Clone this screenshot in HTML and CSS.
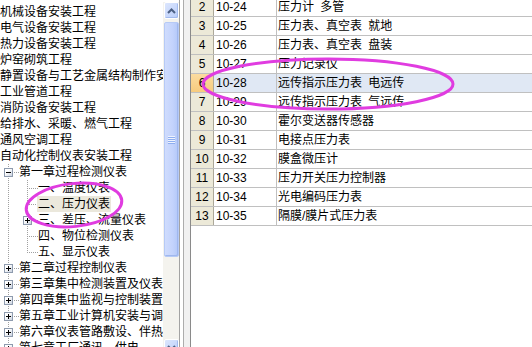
FILE: index.html
```html
<!DOCTYPE html>
<html lang="zh-CN">
<head>
<meta charset="utf-8">
<title>定额树</title>
<link rel="stylesheet" href="styles.css">
</head>
<body>
<div class="app">
  <div class="tree-pane">
    <div class="tree">
      <div class="tree-inner">
        <div class="row"><span class="g"></span><span class="lbl">机械设备安装工程</span></div>
        <div class="row"><span class="g"></span><span class="lbl">电气设备安装工程</span></div>
        <div class="row"><span class="g"></span><span class="lbl">热力设备安装工程</span></div>
        <div class="row"><span class="g"></span><span class="lbl">炉窑砌筑工程</span></div>
        <div class="row"><span class="g"></span><span class="lbl">静置设备与工艺金属结构制作安装工程</span></div>
        <div class="row"><span class="g"></span><span class="lbl">工业管道工程</span></div>
        <div class="row"><span class="g"></span><span class="lbl">消防设备安装工程</span></div>
        <div class="row"><span class="g"></span><span class="lbl">给排水、采暖、燃气工程</span></div>
        <div class="row"><span class="g"></span><span class="lbl">通风空调工程</span></div>
        <div class="row"><span class="g"></span><span class="lbl">自动化控制仪表安装工程</span></div>
        <div class="row"><span class="g"></span><span class="g t"><span class="box minus"></span></span><span class="lbl">第一章过程检测仪表</span></div>
        <div class="row"><span class="g"></span><span class="g v"></span><span class="g t"></span><span class="lbl">一、温度仪表</span></div>
        <div class="row"><span class="g"></span><span class="g v"></span><span class="g t"></span><span class="lbl sel">二、压力仪表</span></div>
        <div class="row"><span class="g"></span><span class="g v"></span><span class="g t"><span class="box plus"></span></span><span class="lbl">三、差压、流量仪表</span></div>
        <div class="row"><span class="g"></span><span class="g v"></span><span class="g t"></span><span class="lbl">四、物位检测仪表</span></div>
        <div class="row"><span class="g"></span><span class="g v"></span><span class="g l"></span><span class="lbl">五、显示仪表</span></div>
        <div class="row"><span class="g"></span><span class="g t"><span class="box plus"></span></span><span class="lbl">第二章过程控制仪表</span></div>
        <div class="row"><span class="g"></span><span class="g t"><span class="box plus"></span></span><span class="lbl">第三章集中检测装置及仪表</span></div>
        <div class="row"><span class="g"></span><span class="g t"><span class="box plus"></span></span><span class="lbl">第四章集中监视与控制装置</span></div>
        <div class="row"><span class="g"></span><span class="g t"><span class="box plus"></span></span><span class="lbl">第五章工业计算机安装与调试</span></div>
        <div class="row"><span class="g"></span><span class="g t"><span class="box plus"></span></span><span class="lbl">第六章仪表管路敷设、伴热</span></div>
        <div class="row"><span class="g"></span><span class="g t"><span class="box plus"></span></span><span class="lbl">第七章工厂通讯、供电</span></div>
      </div>
    </div>
    <div class="vscroll">
      <div class="sb-btn">
        <svg width="9" height="6" viewBox="0 0 9 6"><polyline points="1,5 4.5,1.5 8,5" fill="none" stroke="#4d6185" stroke-width="2"/></svg>
      </div>
      <div class="sb-track">
        <div class="thumb"></div>
      </div>
      <div class="sb-btn">
        <svg width="9" height="6" viewBox="0 0 9 6"><polyline points="1,1 4.5,4.5 8,1" fill="none" stroke="#4d6185" stroke-width="2"/></svg>
      </div>
    </div>
  </div>
  <div class="splitter"></div>
  <div class="grid-pane">
    <div class="grid">
      <div class="grow"><span class="num">2</span><span class="code">10-24</span><span class="name">压力计 多管</span></div>
      <div class="grow"><span class="num">3</span><span class="code">10-25</span><span class="name">压力表、真空表 就地</span></div>
      <div class="grow"><span class="num">4</span><span class="code">10-26</span><span class="name">压力表、真空表 盘装</span></div>
      <div class="grow"><span class="num">5</span><span class="code">10-27</span><span class="name">压力记录仪</span></div>
      <div class="grow cur"><span class="num">6</span><span class="code">10-28</span><span class="name">远传指示压力表 电远传</span></div>
      <div class="grow"><span class="num">7</span><span class="code">10-29</span><span class="name">远传指示压力表 气远传</span></div>
      <div class="grow"><span class="num">8</span><span class="code">10-30</span><span class="name">霍尔变送器传感器</span></div>
      <div class="grow"><span class="num">9</span><span class="code">10-31</span><span class="name">电接点压力表</span></div>
      <div class="grow"><span class="num">10</span><span class="code">10-32</span><span class="name">膜盒微压计</span></div>
      <div class="grow"><span class="num">11</span><span class="code">10-33</span><span class="name">压力开关压力控制器</span></div>
      <div class="grow"><span class="num">12</span><span class="code">10-34</span><span class="name">光电编码压力表</span></div>
      <div class="grow"><span class="num">13</span><span class="code">10-35</span><span class="name">隔膜/膜片式压力表</span></div>
    </div>
  </div>
  <svg class="marks" width="532" height="347" viewBox="0 0 532 347">
    <ellipse cx="74" cy="205" rx="48" ry="21.5" transform="rotate(-6 74 205)" fill="none" stroke="#e03ce0" stroke-width="3"/>
    <ellipse cx="328" cy="84" rx="125" ry="25" fill="none" stroke="#e03ce0" stroke-width="3"/>
  </svg>
</div>
</body>
</html>
```

FILE: styles.css
```css
html, body {
  margin: 0;
  padding: 0;
  background: #ffffff;
}

body {
  font-family: "Liberation Sans", "Noto Sans CJK SC", sans-serif;
  font-size: 12px;
  color: #000000;
}

.app {
  position: relative;
  display: flex;
  align-items: flex-start;
  width: 532px;
  height: 347px;
  overflow: hidden;
}

/* ---------- tree ---------- */
.tree-pane {
  flex: 0 0 180px;
  height: 356px;
  box-sizing: border-box;
  display: flex;
  padding-top: 2px;
  border-right: 1px solid #a3a3a3;
  background: #ffffff;
}

.tree {
  flex: 0 0 163px;
  overflow: hidden;
  padding-top: 2px;
}

.tree-inner {
  margin-left: -19px;
}

.row {
  display: flex;
  height: 16px;
  white-space: nowrap;
}

.g {
  flex: 0 0 19px;
  height: 16px;
  box-sizing: border-box;
  padding: 4px 0 0 4px;
}

.g.v {
  background: repeating-linear-gradient(to bottom, #a0a0a0 0 1px, transparent 1px 2px) 8px 0 / 1px 16px no-repeat;
}

.g.t {
  background:
    repeating-linear-gradient(to bottom, #a0a0a0 0 1px, transparent 1px 2px) 8px 0 / 1px 16px no-repeat,
    repeating-linear-gradient(to right, #a0a0a0 0 1px, transparent 1px 2px) 10px 8px / 9px 1px no-repeat;
}

.g.l {
  background:
    repeating-linear-gradient(to bottom, #a0a0a0 0 1px, transparent 1px 2px) 8px 0 / 1px 9px no-repeat,
    repeating-linear-gradient(to right, #a0a0a0 0 1px, transparent 1px 2px) 10px 8px / 9px 1px no-repeat;
}

.box {
  display: block;
  width: 9px;
  height: 9px;
  box-sizing: border-box;
  border: 1px solid #8e9bae;
}

.box.minus {
  background:
    linear-gradient(#000, #000) center / 5px 1px no-repeat,
    linear-gradient(135deg, #ffffff 35%, #c9d1de);
}

.box.plus {
  background:
    linear-gradient(#000, #000) center / 5px 1px no-repeat,
    linear-gradient(#000, #000) center / 1px 5px no-repeat,
    linear-gradient(135deg, #ffffff 35%, #c9d1de);
}

.lbl {
  display: block;
  line-height: 16px;
  height: 16px;
  padding: 0 1px;
  margin-left: -1px;
}

.lbl.sel {
  background: #ebe8dc;
}

/* ---------- scrollbar ---------- */
.vscroll {
  flex: 0 0 16px;
  display: flex;
  flex-direction: column;
  background: #f4f3ee;
}

.sb-btn {
  flex: 0 0 17px;
  margin-left: 1px;
  box-sizing: border-box;
  border: 1px solid #ffffff;
  border-radius: 2px;
  background: linear-gradient(135deg, #dce6fd, #b9cdfa);
  box-shadow: inset -1px -1px 0 #a3bbef;
  display: flex;
  align-items: center;
  justify-content: center;
}

.sb-track {
  flex: 1 1 auto;
  display: flex;
  flex-direction: column;
}

.thumb {
  margin: 3px 0 0 1px;
  height: 235px;
  box-sizing: border-box;
  border: 1px solid #b6caf6;
  border-radius: 2px;
  background:
    repeating-linear-gradient(to bottom, #eef3fe 0 1px, #8eaef0 1px 2px) center / 7px 8px no-repeat,
    linear-gradient(to right, #cfdcfd, #c3d3fc 60%, #b3c8f8);
  box-shadow: inset -1px -1px 0 #9fb7ee;
}

/* ---------- splitter ---------- */
.splitter {
  flex: 0 0 10px;
  height: 347px;
  background: linear-gradient(to right, #ffffff 0 3px, #acacac 3px 4px, #f1f1f1 4px 10px);
}

/* ---------- grid ---------- */
.grid-pane {
  flex: 1 1 auto;
  height: 347px;
  box-sizing: border-box;
  border-left: 1px solid #8a8a8a;
}

.grid {
  margin-top: -2px;
}

.grow {
  display: grid;
  grid-template-columns: 23px 63px 1fr;
  height: 19px;
  box-sizing: border-box;
  border-bottom: 1px solid #c0c0c0;
  line-height: 18px;
  white-space: nowrap;
}

.num {
  background: #ece9d8;
  border-right: 1px solid #aca899;
  text-align: center;
}

.code {
  padding-left: 2px;
  border-right: 1px solid #c0c0c0;
}

.name {
  padding-left: 1px;
  word-spacing: 3px;
}

.grow.cur .num {
  background: linear-gradient(#fbdca0, #f7cb7e);
}

.grow.cur .code,
.grow.cur .name {
  background: #e0e8f4;
}

/* ---------- annotation marks ---------- */
.marks {
  position: absolute;
  left: 0;
  top: 0;
  pointer-events: none;
}
```
